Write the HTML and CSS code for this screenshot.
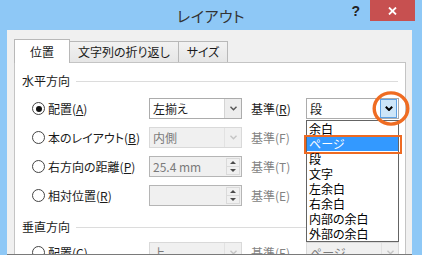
FILE: index.html
```html
<!DOCTYPE html>
<html lang="ja">
<head>
<meta charset="utf-8">
<link rel="stylesheet" href="styles.css">
</head>
<body>
<div class="titlebar">
  <div></div>
  <div class="title">レイアウト</div>
  <div class="controls">
    <span class="help">?</span>
    <span class="close"><svg width="9" height="8" viewBox="0 0 9 8"><path d="M1 0.5 L8 7.5 M8 0.5 L1 7.5" stroke="#fff" stroke-width="1.8"/></svg></span>
  </div>
</div>
<div class="dialog">
  <div class="tabs">
    <div class="tab active">位置</div>
    <div class="tab">文字列の折り返し</div>
    <div class="tab">サイズ</div>
  </div>
  <div class="panel">
    <div class="group-title"><span>水平方向</span></div>
    <div class="rows">
      <div class="row">
        <span class="radio checked"></span>
        <span class="label">配置(<u>A</u>)</span>
        <div class="combo"><span class="value">左揃え</span><span class="btn"><svg width="7" height="5" viewBox="0 0 7 5"><path d="M0.5 0.8 L3.5 3.8 L6.5 0.8" fill="none" stroke="#555" stroke-width="1.4"/></svg></span></div>
        <span class="label2">基準(<u>R</u>)</span>
        <div class="combo open"><span class="value">段</span><span class="btn"><svg width="8" height="5" viewBox="0 0 8 5"><path d="M0.8 0.8 L4 4 L7.2 0.8" fill="none" stroke="#000" stroke-width="2"/></svg></span>
          <svg class="ring" width="38" height="35" viewBox="0 0 38 35"><ellipse cx="19" cy="17.5" rx="16.8" ry="15.6" fill="none" stroke="#ef6c22" stroke-width="3.4"/></svg>
          <ul class="list">
            <li>余白</li>
            <li class="selected">ページ</li>
            <li>段</li>
            <li>文字</li>
            <li>左余白</li>
            <li>右余白</li>
            <li>内部の余白</li>
            <li>外部の余白</li>
          </ul>
        </div>
      </div>
      <div class="row">
        <span class="radio"></span>
        <span class="label">本のレイアウト(<u>B</u>)</span>
        <div class="combo disabled"><span class="value">内側</span><span class="btn"><svg width="7" height="5" viewBox="0 0 7 5"><path d="M0.5 0.8 L3.5 3.8 L6.5 0.8" fill="none" stroke="#c4c4c4" stroke-width="1.4"/></svg></span></div>
        <span class="label2 dim">基準(F)</span>
        <div class="combo disabled"><span class="value"></span><span class="btn"></span></div>
      </div>
      <div class="row">
        <span class="radio"></span>
        <span class="label">右方向の距離(<u>P</u>)</span>
        <div class="spin"><span class="value">25.4 mm</span><span class="arrows"><span class="up"></span><span class="down"></span></span></div>
        <span class="label2 dim">基準(T)</span>
        <div class="combo disabled"><span class="value"></span><span class="btn"></span></div>
      </div>
      <div class="row">
        <span class="radio"></span>
        <span class="label">相対位置(<u>R</u>)</span>
        <div class="spin"><span class="value"></span><span class="arrows"><span class="up"></span><span class="down"></span></span></div>
        <span class="label2 dim">基準(E)</span>
        <div class="combo disabled"><span class="value"></span><span class="btn"></span></div>
      </div>
    </div>
    <div class="group-title second"><span>垂直方向</span></div>
    <div class="rows last">
      <div class="row">
        <span class="radio"></span>
        <span class="label">配置(<u>C</u>)</span>
        <div class="combo disabled"><span class="value">上</span><span class="btn"><svg width="7" height="5" viewBox="0 0 7 5"><path d="M0.5 0.8 L3.5 3.8 L6.5 0.8" fill="none" stroke="#c4c4c4" stroke-width="1.4"/></svg></span></div>
        <span class="label2 dim">基準(E)</span>
        <div class="combo disabled"><span class="value">ページ</span><span class="btn"><svg width="7" height="5" viewBox="0 0 7 5"><path d="M0.5 0.8 L3.5 3.8 L6.5 0.8" fill="none" stroke="#c4c4c4" stroke-width="1.4"/></svg></span></div>
      </div>
    </div>
  </div>
</div>
</body>
</html>
```
FILE: styles.css
```css
html, body {
  margin: 0;
  padding: 0;
}
body {
  width: 422px;
  height: 255px;
  overflow: hidden;
  position: relative;
  background: #8ec8f6;
  font-family: "Noto Sans CJK JP", "Noto Sans", sans-serif;
  font-size: 12px;
  font-feature-settings: "palt";
  color: #1a1a1a;
}
body::after {
  content: "";
  position: absolute;
  left: 7px;
  right: 10px;
  bottom: 0;
  height: 1px;
  background: #7a7a7a;
}

/* title bar */
.titlebar {
  height: 30px;
  display: grid;
  grid-template-columns: 1fr auto 1fr;
}
.title {
  font-size: 15px;
  line-height: 32px;
  color: #333;
  letter-spacing: 0.5px;
}
.controls {
  justify-self: end;
  display: flex;
  align-items: flex-start;
}
.help {
  font-family: "Liberation Sans", sans-serif;
  font-weight: bold;
  font-size: 14px;
  line-height: 22px;
  color: #222;
  margin-right: 10px;
}
.close {
  width: 45px;
  height: 21px;
  margin-right: 7px;
  background: #c75050;
  display: flex;
  align-items: center;
  justify-content: center;
}

/* dialog body */
.dialog {
  height: 225px;
  margin: 0 10px 0 7px;
  padding: 9px 6px 0 7px;
  box-sizing: border-box;
  background: #f0f0f0;
}
.tabs {
  display: flex;
  align-items: flex-end;
  height: 23px;
}
.tab {
  position: relative;
  height: 21px;
  box-sizing: border-box;
  padding: 0 8px;
  margin-right: -1px;
  border: 1px solid #b8b8b8;
  border-bottom: none;
  background: linear-gradient(#f2f2f2, #e6e6e6);
  line-height: 19px;
  color: #1a1a1a;
}
.tab.active {
  height: 24px;
  margin-bottom: -1px;
  padding: 0 15px;
  background: #fff;
  z-index: 1;
  line-height: 24px;
}
.panel {
  height: 200px;
  background: #fff;
  border: 1px solid #c4c4c4;
}

.group-title {
  display: flex;
  align-items: center;
  gap: 6px;
  height: 18px;
  margin: 9px 7px 0 7px;
  line-height: 18px;
}
.group-title::after {
  content: "";
  flex: 1;
  height: 1px;
  background: #dcdcdc;
}
.group-title.second {
  margin-top: 8px;
}

.rows {
  margin-top: 4px;
  padding-left: 17px;
}
.rows.last {
  margin-top: 2px;
}
.row {
  display: grid;
  grid-template-columns: 16px 101px 93px 64px 93px;
  height: 29px;
  align-items: center;
}
.radio {
  width: 13px;
  height: 13px;
  box-sizing: border-box;
  border: 1px solid #444;
  border-radius: 50%;
  display: flex;
  align-items: center;
  justify-content: center;
}
.radio.checked::before {
  content: "";
  width: 6px;
  height: 6px;
  border-radius: 50%;
  background: #111;
}
.label {
  white-space: nowrap;
}
.label2 {
  padding-left: 9px;
  white-space: nowrap;
}
.dim {
  color: #838383;
}

.combo, .spin {
  position: relative;
  height: 21px;
  box-sizing: border-box;
  border: 1px solid #acacac;
  background: #fff;
  display: flex;
}
.value {
  flex: 1;
  padding-left: 3px;
  line-height: 19px;
  white-space: nowrap;
  overflow: hidden;
}
.combo .btn {
  width: 16px;
  border-left: 1px solid #d4d4d4;
  background: #ededed;
  display: flex;
  align-items: center;
  justify-content: center;
}
.combo.disabled {
  border-color: #d9d9d9;
  background: #f0f0f0;
  color: #7a7a7a;
}
.combo.disabled .btn {
  background: #f0f0f0;
  border-left-color: #e2e2e2;
}
.combo.open .btn {
  width: 15px;
  margin: 0 1px 0 0;
  border: 1px solid #5ea2e4;
  background: #cde6f9;
}

.spin {
  background: #f0f0f0;
  border-color: #b5b5b5;
  color: #7a7a7a;
}
.arrows {
  width: 14px;
  margin: 1px 1px 1px 0;
  display: flex;
  flex-direction: column;
  border: 1px solid #dadada;
  box-sizing: border-box;
}
.arrows span {
  flex: 1;
  display: flex;
  align-items: center;
  justify-content: center;
}
.arrows .up {
  border-bottom: 1px solid #dadada;
}
.arrows .up::before {
  content: "";
  border: 3px solid transparent;
  border-top: none;
  border-bottom: 3px solid #4a4a4a;
}
.arrows .down::before {
  content: "";
  border: 3px solid transparent;
  border-bottom: none;
  border-top: 3px solid #4a4a4a;
}

/* open dropdown */
.ring {
  position: absolute;
  left: 65px;
  top: -8px;
  z-index: 3;
}
.list {
  position: absolute;
  left: -1px;
  top: 21px;
  width: 93px;
  margin: 0;
  padding: 0;
  list-style: none;
  box-sizing: border-box;
  border: 1px solid #646464;
  background: #fff;
  z-index: 2;
  color: #000;
}
.list li {
  position: relative;
  height: 15px;
  line-height: 15px;
  padding-left: 2px;
}
.list li.selected {
  background: #3399ff;
  color: #fff;
}
.list li.selected::after {
  content: "";
  position: absolute;
  left: -3px;
  right: -4px;
  top: -1px;
  bottom: -3px;
  border: 2.5px solid #ee6a22;
}
```
